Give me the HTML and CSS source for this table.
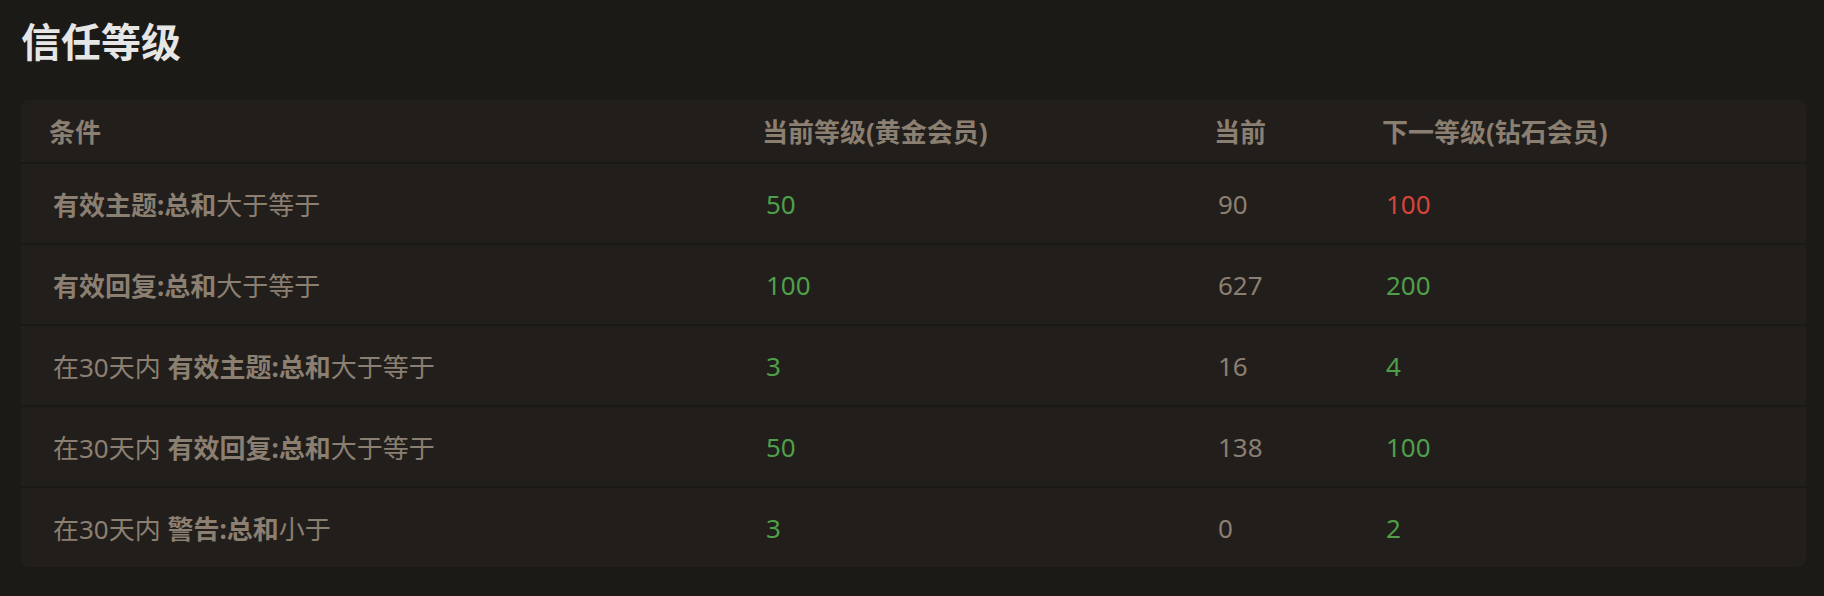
FILE: index.html
```html
<!DOCTYPE html>
<html lang="zh-CN">
<head>
<meta charset="utf-8">
<title>信任等级</title>
<link rel="stylesheet" href="styles.css">
</head>
<body>
<h1 class="title">信任等级</h1>
<div class="card">
  <table class="levels">
    <colgroup>
      <col class="c-cond">
      <col class="c-cur-level">
      <col class="c-cur">
      <col class="c-next">
    </colgroup>
    <thead>
      <tr>
        <th>条件</th>
        <th>当前等级(黄金会员)</th>
        <th>当前</th>
        <th>下一等级(钻石会员)</th>
      </tr>
    </thead>
    <tbody>
      <tr>
        <td class="cond"><b>有效主题:总和</b>大于等于</td>
        <td class="ok">50</td>
        <td>90</td>
        <td class="bad">100</td>
      </tr>
      <tr>
        <td class="cond"><b>有效回复:总和</b>大于等于</td>
        <td class="ok">100</td>
        <td>627</td>
        <td class="ok">200</td>
      </tr>
      <tr>
        <td class="cond">在30天内 <b>有效主题:总和</b>大于等于</td>
        <td class="ok">3</td>
        <td>16</td>
        <td class="ok">4</td>
      </tr>
      <tr>
        <td class="cond">在30天内 <b>有效回复:总和</b>大于等于</td>
        <td class="ok">50</td>
        <td>138</td>
        <td class="ok">100</td>
      </tr>
      <tr>
        <td class="cond">在30天内 <b>警告:总和</b>小于</td>
        <td class="ok">3</td>
        <td>0</td>
        <td class="ok">2</td>
      </tr>
    </tbody>
  </table>
</div>
</body>
</html>
```

FILE: styles.css
```css
html, body {
  margin: 0;
  padding: 0;
  background: #1c1a17;
}

body {
  font-family: "Noto Sans", "Noto Sans CJK SC", sans-serif;
  color: #8b7f71;
}

.title {
  margin: 0;
  padding: 18px 21px 0;
  font-size: 40px;
  line-height: 48px;
  font-weight: 700;
  color: #e6e6e6;
}

.card {
  margin: 34px 18px 0 21px;
  background: #221e1b;
  border-radius: 8px;
  overflow: hidden;
}

.levels {
  width: 100%;
  border-collapse: collapse;
  table-layout: fixed;
  font-size: 26px;
}

.c-cond { width: 713px; }
.c-cur-level { width: 452px; }
.c-cur { width: 168px; }

.levels th {
  height: 62px;
  padding: 0 0 0 28px;
  text-align: left;
  font-weight: 700;
  color: #8b7f71;
  border-bottom: 2px solid #1b1916;
  vertical-align: middle;
}

.levels td {
  height: 79px;
  padding: 0 0 0 32px;
  border-bottom: 2px solid #1b1916;
  vertical-align: middle;
  white-space: nowrap;
}

.levels tbody tr:last-child td {
  border-bottom: none;
}

.levels b {
  font-weight: 700;
}

.ok { color: #4f9f4a; }
.bad { color: #d8443a; }
```
